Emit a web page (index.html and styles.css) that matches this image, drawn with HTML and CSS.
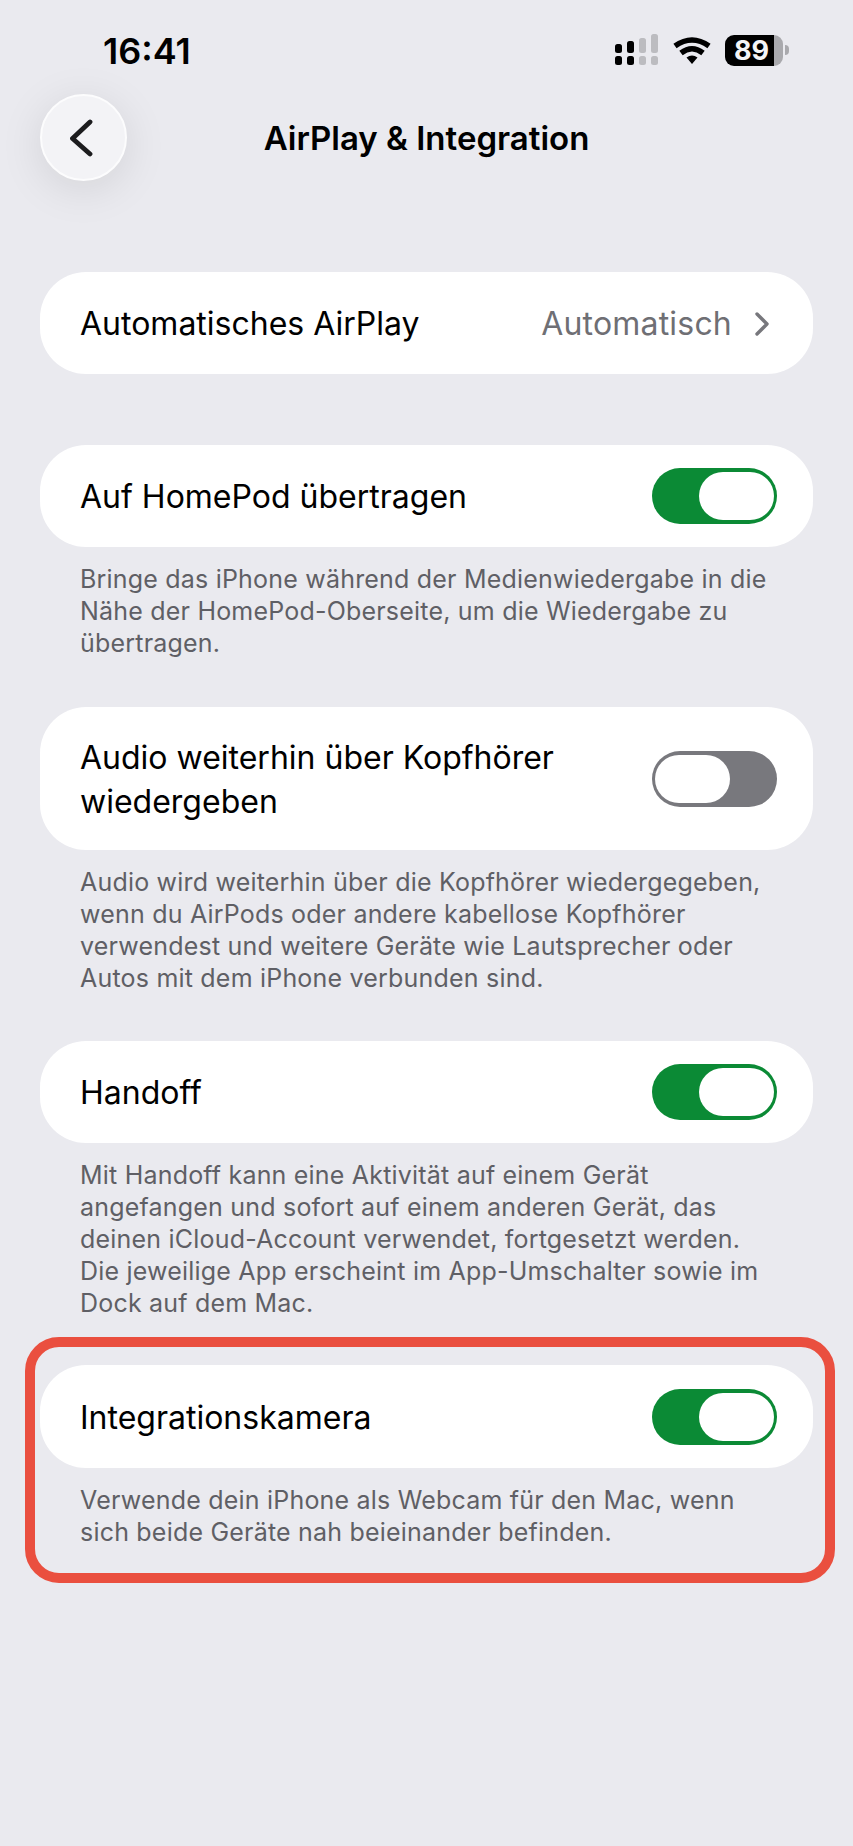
FILE: index.html
```html
<!DOCTYPE html>
<html lang="de">
<head>
  <meta charset="UTF-8">
  <title>AirPlay &amp; Integration</title>
  <meta name="viewport" content="width=device-width, initial-scale=1.0">
  <link rel="stylesheet" href="styles.css">
</head>
<body>

  <div class="statusbar">
    <span class="time">16:41</span>
    <div class="status-icons">
      <svg class="signal" width="44" height="32" viewBox="0 0 44 32">
        <rect x="0" y="10" width="7" height="9" rx="2.5" fill="#000"/>
        <rect x="0" y="22" width="7" height="9" rx="2.5" fill="#000"/>
        <rect x="12" y="7" width="7" height="12" rx="2.5" fill="#000"/>
        <rect x="12" y="22" width="7" height="9" rx="2.5" fill="#000"/>
        <rect x="24" y="4" width="7" height="15" rx="2.5" fill="#bcbcc0"/>
        <rect x="24" y="22" width="7" height="9" rx="2.5" fill="#bcbcc0"/>
        <rect x="36" y="0" width="7" height="19" rx="2.5" fill="#bcbcc0"/>
        <rect x="36" y="22" width="7" height="9" rx="2.5" fill="#bcbcc0"/>
      </svg>
      <svg class="wifi" width="38" height="30" viewBox="0 0 38 30">
        <path d="M19 29 L13.5 22.5 Q19 18.500 24.500 22.500 Z" fill="#000"/>
        <path d="M8 18 Q19 9.500 30 18" fill="none" stroke="#000" stroke-width="5.500"/>
        <path d="M2 11 Q19 -1 36 11" fill="none" stroke="#000" stroke-width="5.500"/>
      </svg>
      <div class="battery">
        <div class="battery-body">
          <span class="battery-level">89</span>
        </div>
        <span class="battery-cap"></span>
      </div>
    </div>
  </div>

  <header class="navbar">
    <button class="back" type="button">
      <svg width="26" height="38" viewBox="0 0 26 38">
        <path d="M22 3 L4.500 19.500 L22 35" fill="none" stroke="#1c1c1e" stroke-width="4.800" stroke-linecap="round" stroke-linejoin="round"/>
      </svg>
    </button>
    <h1>AirPlay &amp; Integration</h1>
  </header>

  <main class="content">
    <section class="group group-first">
      <div class="row">
        <span class="label">Automatisches AirPlay</span>
        <span class="value">Automatisch</span>
        <svg class="chevron" width="16" height="26" viewBox="0 0 16 26">
          <path d="M3 3 L13 13 L3 23" fill="none" stroke="#77777c" stroke-width="3.400" stroke-linecap="round" stroke-linejoin="round"/>
        </svg>
      </div>
    </section>

    <section class="group group-homepod">
      <div class="row">
        <span class="label">Auf HomePod übertragen</span>
        <span class="switch on"><span class="thumb"></span></span>
      </div>
      <p class="note">Bringe das iPhone während der Medienwiedergabe in die<br>Nähe der HomePod-Oberseite, um die Wiedergabe zu<br>übertragen.</p>
    </section>

    <section class="group group-audio">
      <div class="row row-tall">
        <span class="label">Audio weiterhin über Kopfhörer<br>wiedergeben</span>
        <span class="switch"><span class="thumb"></span></span>
      </div>
      <p class="note">Audio wird weiterhin über die Kopfhörer wiedergegeben,<br>wenn du AirPods oder andere kabellose Kopfhörer<br>verwendest und weitere Geräte wie Lautsprecher oder<br>Autos mit dem iPhone verbunden sind.</p>
    </section>

    <section class="group group-handoff">
      <div class="row">
        <span class="label">Handoff</span>
        <span class="switch on"><span class="thumb"></span></span>
      </div>
      <p class="note">Mit Handoff kann eine Aktivität auf einem Gerät<br>angefangen und sofort auf einem anderen Gerät, das<br>deinen iCloud-Account verwendet, fortgesetzt werden.<br>Die jeweilige App erscheint im App-Umschalter sowie im<br>Dock auf dem Mac.</p>
    </section>

    <section class="group group-camera">
      <div class="row row-camera">
        <span class="label">Integrationskamera</span>
        <span class="switch on"><span class="thumb"></span></span>
      </div>
      <p class="note">Verwende dein iPhone als Webcam für den Mac, wenn<br>sich beide Geräte nah beieinander befinden.</p>
      <div class="highlight"></div>
    </section>
  </main>

</body>
</html>
```
FILE: styles.css
```css
:root {
  --bg: #eaeaef;
  --card: #ffffff;
  --text: #000000;
  --muted: #5f5f65;
  --value: #6f6f74;
  --green: #0b8a35;
  --grey: #78787d;
  --red: #ea4f3f;
}

* {
  box-sizing: border-box;
}

body {
  margin: 0;
  width: 853px;
  height: 1846px;
  overflow: hidden;
  font-family: Inter, "Noto Sans", sans-serif;
  background-color: var(--bg);
  color: var(--text);
}

.statusbar {
  height: 94px;
  padding: 30px 64px 0 103px;
  display: flex;
  justify-content: space-between;
  align-items: flex-start;
}

.time {
  font-size: 36px;
  line-height: 42px;
  font-weight: 600;
}

.status-icons {
  display: flex;
  align-items: center;
  gap: 14px;
  height: 36px;
  margin-top: 2px;
}

.battery {
  display: flex;
  align-items: center;
  gap: 2px;
}

.battery-body {
  width: 58px;
  height: 31px;
  border-radius: 9px;
  background: linear-gradient(to right, #000 0 84%, #a9a9ad 84% 100%);
  display: flex;
  align-items: center;
  padding-left: 9px;
}

.battery-level {
  font-size: 27px;
  line-height: 31px;
  font-weight: 700;
  color: #f4f4f6;
}

.battery-cap {
  width: 4px;
  height: 10px;
  border-radius: 0 4px 4px 0;
  background: #a9a9ad;
}

.navbar {
  height: 87px;
  padding: 0 40px;
  position: relative;
  display: flex;
  align-items: center;
}

.back {
  width: 87px;
  height: 87px;
  padding: 0;
  border: 2px solid #fcfcfd;
  border-radius: 50%;
  background: #f3f3f6;
  box-shadow: 0 8px 44px rgba(0, 0, 0, 0.1);
  display: flex;
  align-items: center;
  justify-content: center;
}

.back svg {
  margin-right: 6px;
}

h1 {
  position: absolute;
  left: 0;
  right: 0;
  margin: 0;
  font-size: 33px;
  line-height: 44px;
  font-weight: 600;
  text-align: center;
}

.content {
  padding: 0 40px;
}

.group {
  position: relative;
}

.group-first {
  margin-top: 91px;
}

.group-homepod {
  margin-top: 71px;
}

.group-audio {
  margin-top: 48px;
}

.group-handoff {
  margin-top: 47px;
}

.group-camera {
  margin-top: 46px;
}

.row {
  min-height: 102px;
  padding: 2px 36px 0 40px;
  background: var(--card);
  border-radius: 46px;
  display: flex;
  align-items: center;
}

.row-tall {
  min-height: 143px;
}

.row-camera {
  min-height: 103px;
}

.label {
  flex: 1;
  font-size: 32px;
  line-height: 44px;
}

.value {
  font-size: 32px;
  line-height: 44px;
  letter-spacing: 0.2px;
  color: var(--value);
  margin-right: 22px;
}

.chevron {
  margin-right: 7px;
}

.switch {
  width: 125px;
  height: 56px;
  padding: 4px 3px;
  border-radius: 28px;
  background: var(--grey);
  display: flex;
  justify-content: flex-start;
  margin-top: -2px;
}

.switch.on {
  background: var(--green);
  justify-content: flex-end;
}

.thumb {
  width: 75px;
  height: 48px;
  border-radius: 24px;
  background: #fff;
}

.note {
  margin: 0;
  padding: 16px 40px 0;
  font-size: 25px;
  line-height: 32px;
  letter-spacing: 0.2px;
  color: var(--muted);
}

.highlight {
  position: absolute;
  left: -15px;
  right: -22px;
  top: -28px;
  bottom: -35px;
  border: 10px solid var(--red);
  border-radius: 34px;
}
```
